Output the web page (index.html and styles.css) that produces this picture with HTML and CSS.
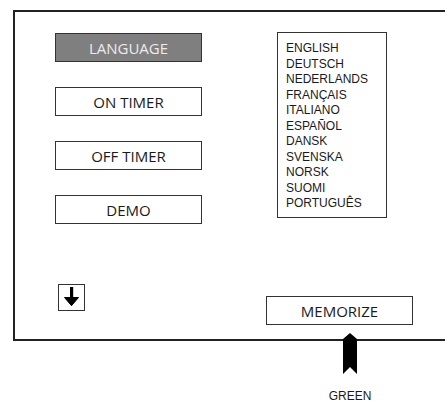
FILE: index.html
```html
<!DOCTYPE html>
<html>
<head>
<meta charset="utf-8">
<link rel="stylesheet" href="styles.css">
</head>
<body>
<div class="screen">
  <div class="frame">
    <div class="left-col">
      <div class="btn btn-active">LANGUAGE</div>
      <div class="btn">ON TIMER</div>
      <div class="btn">OFF TIMER</div>
      <div class="btn">DEMO</div>
      <div class="down-box">
        <svg width="25" height="25" viewBox="0 0 25 25">
          <rect x="11" y="2" width="3.2" height="12" fill="#000"/>
          <path d="M5.5 12.5 L19.5 12.5 L12.5 20.7 Z" fill="#000" stroke="#000" stroke-width="1" stroke-linejoin="round"/>
        </svg>
      </div>
    </div>
    <div class="right-col">
      <ul class="lang-list">
        <li>ENGLISH</li>
        <li>DEUTSCH</li>
        <li>NEDERLANDS</li>
        <li>FRANÇAIS</li>
        <li>ITALIANO</li>
        <li>ESPAÑOL</li>
        <li>DANSK</li>
        <li>SVENSKA</li>
        <li>NORSK</li>
        <li>SUOMI</li>
        <li>PORTUGUÊS</li>
      </ul>
      <div class="btn btn-memorize">MEMORIZE</div>
    </div>
  </div>
  <div class="callout">
    <svg class="up-arrow" width="14" height="41" viewBox="0 0 14 41">
      <polygon points="7,0 14,6 14,41 7,34 0,41 0,6" fill="#000"/>
    </svg>
    <div class="callout-label">GREEN</div>
  </div>
</div>
</body>
</html>
```

FILE: styles.css
```css
* { box-sizing: border-box; }
html, body {
  margin: 0;
  padding: 0;
  background: #fff;
  overflow: hidden;
}
body {
  width: 445px;
  height: 403px;
  font-family: "Liberation Sans", Arial, sans-serif;
  color: #1a1a1a;
}
.screen {
  padding: 10px 0 0 13px;
}
.frame {
  width: 432px;
  height: 331px;
  border: 2px solid #222;
  border-right: none;
  display: flex;
  padding: 21px 0 0 40px;
  gap: 64px;
  overflow: hidden;
}
.left-col {
  width: 147px;
  flex-shrink: 0;
  display: flex;
  flex-direction: column;
}
.btn {
  flex-shrink: 0;
  width: 147px;
  height: 29px;
  border: 1px solid #333;
  display: flex;
  align-items: center;
  justify-content: center;
  font-family: "Open Sans", "Liberation Sans", sans-serif;
  font-size: 15px;
  color: #1a1a1a;
  background: #fff;
  margin-bottom: 25px;
}
.btn-active {
  background: #7f7f7f;
  color: #ececec;
  border-color: #333;
}
.down-box {
  flex-shrink: 0;
  margin-top: 35px;
  margin-left: 3px;
  width: 27px;
  height: 27px;
  border: 1px solid #333;
}
.down-box svg { display: block; }
.right-col {
  flex-shrink: 0;
  display: flex;
  flex-direction: column;
}
.lang-list {
  flex-shrink: 0;
  list-style: none;
  margin: -1px 0 0 11px;
  padding: 8px 0 0 8px;
  width: 110px;
  height: 186px;
  border: 1px solid #333;
  font-size: 12px;
  line-height: 15.5px;
}
.lang-list li { margin: 0; padding: 0; }
.btn-memorize {
  margin-top: 78px;
}
.callout {
  width: 60px;
  margin-left: 307px;
  display: flex;
  flex-direction: column;
  align-items: center;
}
.up-arrow {
  display: block;
  margin-top: -8px;
}
.callout-label {
  margin-top: 17px;
  font-size: 12px;
  line-height: 11px;
  color: #1a1a1a;
}
```
